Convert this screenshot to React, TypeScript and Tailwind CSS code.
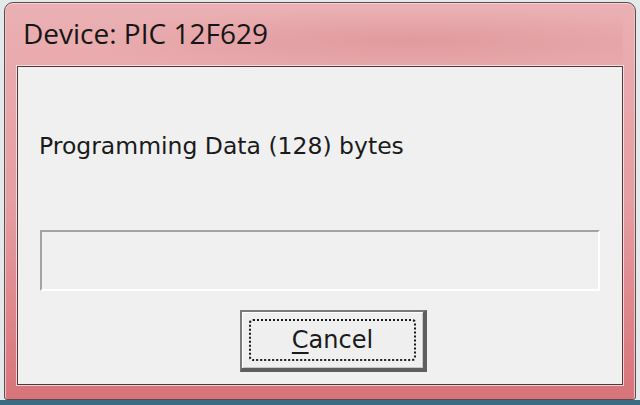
export default function App() {
  return (
    <div className="w-[640px] h-[405px] flex flex-col bg-[#e4e9ec] overflow-hidden">
      <div className="flex-1 pt-[2px] pl-[4px]">
        <div className="w-[632px] h-[398px] flex flex-col px-[12px] pb-[14px] border border-[#5b4a4b] rounded-t-[9px] rounded-b-[3px] bg-gradient-to-b from-[#eab0b3] via-[#e59ea2] to-[#d8737a] shadow-[inset_0_1px_0_#f6d6d8,inset_1px_0_0_#f0c4c6,inset_-1px_0_0_#f0c4c6]">
          <div className="h-[63px] pt-[11px] pl-[6px] bg-[radial-gradient(ellipse_at_65%_60%,rgba(210,120,126,0.35),transparent_60%)]">
            <span className="text-[28px] leading-[38px] text-[#161616] font-['Open_Sans',sans-serif]">
              Device: PIC 12F629
            </span>
          </div>
          <div className="flex-1 flex flex-col border border-[#4a3a3b] bg-[#f0f0f0] shadow-[0_0_0_1px_rgba(255,235,235,0.75)] font-['DejaVu_Sans',sans-serif]">
            <p className="mt-[66px] pl-[21px] text-[23.5px] leading-[27px] text-[#1a1a1a]">
              Programming Data (128) bytes
            </p>
            <div className="mt-[70px] ml-[22px] w-[560px] h-[61px] border-2 border-t-[#a3a3a3] border-l-[#a3a3a3] border-b-white border-r-white bg-[#f0f0f0]" />
            <button className="mt-[19px] ml-[222px] w-[187px] h-[62px] border-t-2 border-l-2 border-r-4 border-b-4 border-t-[#7a7a7a] border-l-[#7a7a7a] border-r-[#5e5e5e] border-b-[#5e5e5e] bg-[#efefef] shadow-[inset_1px_1px_0_#ffffff,inset_-1px_-1px_0_#c8c8c8] p-[7px] flex">
              <span className="flex-1 flex items-center justify-center border-2 border-dotted border-[#1a1a1a] rounded-[4px] text-[24px] leading-none text-[#1a1a1a]">
                <span>
                  <span className="underline underline-offset-[4px] decoration-2">C</span>ancel
                </span>
              </span>
            </button>
          </div>
        </div>
      </div>
      <div className="h-[5px] bg-[#3b6c84]" />
    </div>
  );
}
